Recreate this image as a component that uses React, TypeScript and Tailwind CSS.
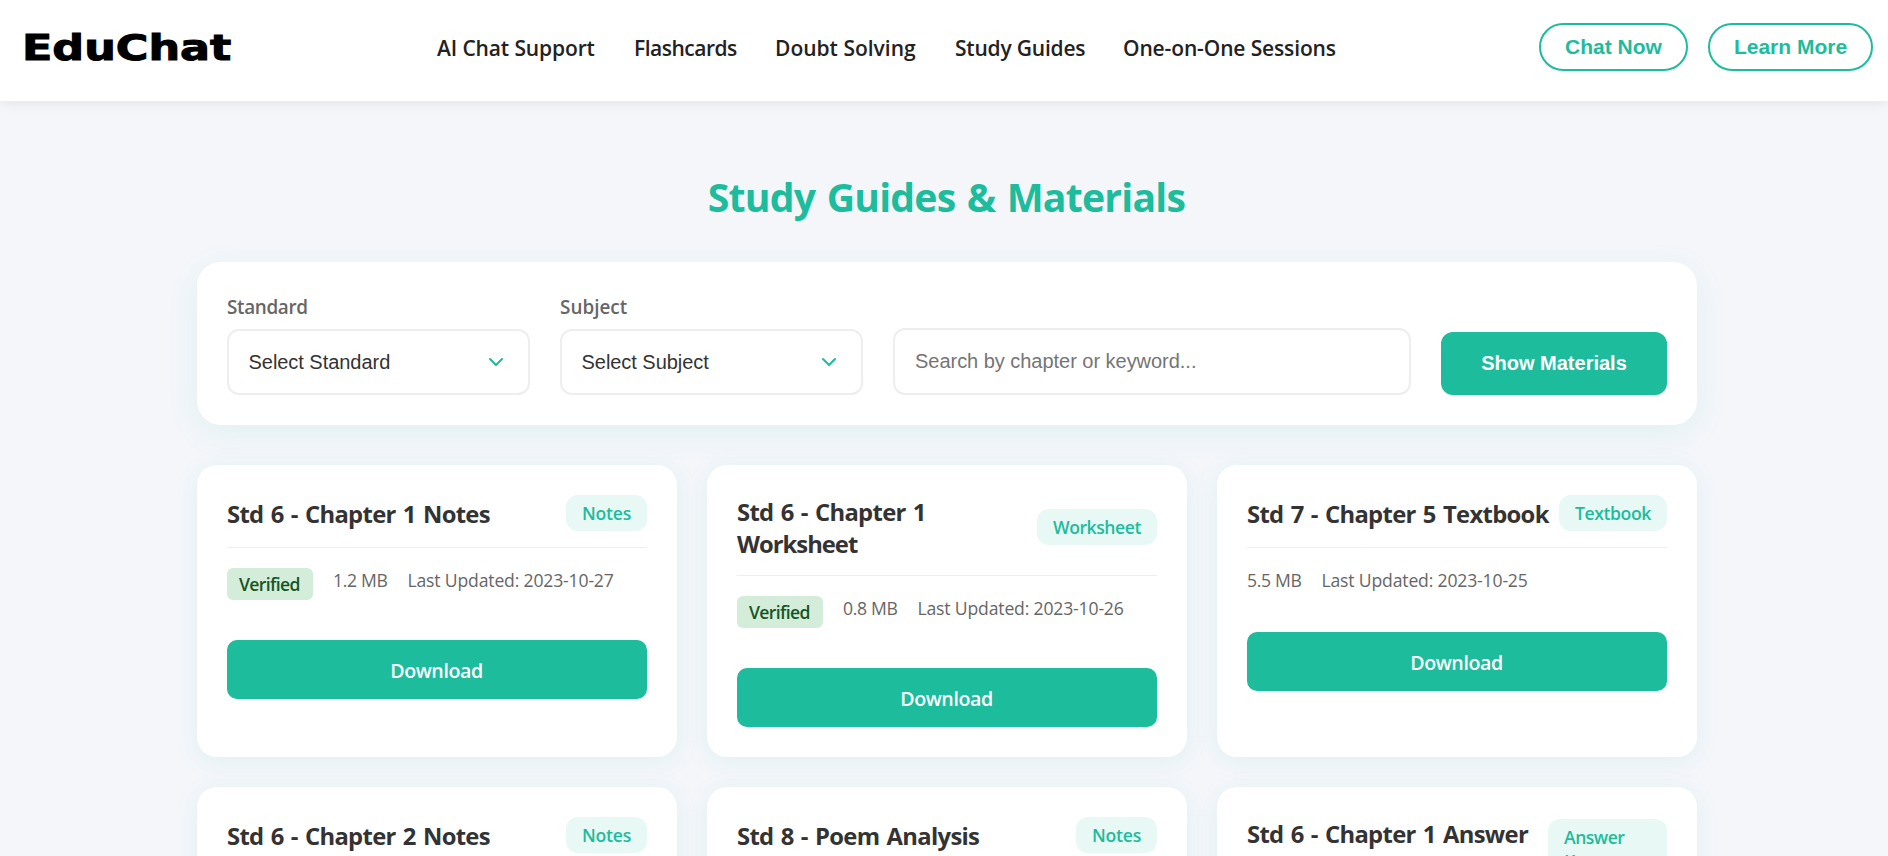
import type { ReactNode } from 'react'

type Material = {
  title: ReactNode
  badge: string
  badgeClass: string
  verified?: boolean
  size: string
  updated: string
}

const materials: Material[] = [
  { title: 'Std 6 - Chapter 1 Notes', badge: 'Notes', badgeClass: 'w-[81px] tracking-[-0.24px]', verified: true, size: '1.2 MB', updated: '2023-10-27' },
  { title: <>Std 6 - Chapter 1 <span className="tracking-[-1px]">Worksheet</span></>, badge: 'Worksheet', badgeClass: 'w-[120px] tracking-[-0.45px]', verified: true, size: '0.8 MB', updated: '2023-10-26' },
  { title: 'Std 7 - Chapter 5 Textbook', badge: 'Textbook', badgeClass: 'w-[108px] tracking-[-0.42px]', size: '5.5 MB', updated: '2023-10-25' },
  { title: 'Std 6 - Chapter 2 Notes', badge: 'Notes', badgeClass: 'w-[81px] tracking-[-0.24px]', verified: true, size: '1.5 MB', updated: '2023-10-24' },
  { title: 'Std 8 - Poem Analysis', badge: 'Notes', badgeClass: 'w-[81px] tracking-[-0.24px]', verified: true, size: '0.9 MB', updated: '2023-10-23' },
  { title: 'Std 6 - Chapter 1 Answer Key', badge: 'Answer Key', badgeClass: 'w-[119px] pr-10 tracking-[-0.5px]', size: '0.7 MB', updated: '2023-10-22' },
]

const navLinks = [
  { label: 'AI Chat Support', className: 'w-[157px] tracking-[-0.12px]' },
  { label: 'Flashcards', className: 'w-[101px] tracking-[-0.5px]' },
  { label: 'Doubt Solving', className: 'w-[140px]' },
  { label: 'Study Guides', className: 'w-[128px] tracking-[-0.2px]' },
  { label: 'One-on-One Sessions', className: 'w-[212px] tracking-[-0.13px]' },
]

function Chevron() {
  return (
    <svg width="14" height="10" viewBox="0 0 14 10" fill="none" stroke="#1cbc9c" strokeWidth="2" strokeLinecap="round" strokeLinejoin="round">
      <path d="m1 2 6 6 6-6" />
    </svg>
  )
}

function SelectField({ label, labelClass, placeholder }: { label: string; labelClass: string; placeholder: string }) {
  return (
    <div className="flex w-[303px] flex-col gap-[7px]">
      <label className={`text-[18.9px] leading-[29px] font-semibold text-[#666] ${labelClass}`}>{label}</label>
      <button className="flex h-[66px] items-center justify-between rounded-xl border-2 border-[#eee] bg-white pr-[25px] pl-[19.5px] font-['Liberation_Sans',sans-serif] text-xl tracking-[-0.04px] text-[#333]">
        {placeholder}
        <Chevron />
      </button>
    </div>
  )
}

function Card({ item }: { item: Material }) {
  return (
    <article className="rounded-[20px] bg-white p-[30px] shadow-[0_4px_24px_rgba(28,188,156,0.09)]">
      <div className="flex items-center justify-between border-b border-[#eee] pb-4">
        <h3 className="text-[23.8px] leading-8 font-bold tracking-[-0.68px] text-[#333] [word-spacing:1.7px]">
          <span className="relative top-[0.6px]">{item.title}</span>
        </h3>
        <span className={`shrink-0 rounded-xl bg-[#e8f8f5] px-4 py-1.5 text-[17.6px] leading-6 font-semibold text-[#1cbc9c] ${item.badgeClass}`}>{item.badge}</span>
      </div>
      <div className="mt-5 flex items-start gap-5 text-[17.6px] leading-6 text-[#666]">
        {item.verified && (
          <span className="w-[86px] rounded-md bg-[#d4edda] px-3 py-1 font-semibold tracking-[-0.65px] text-[#155724]">Verified</span>
        )}
        <span className="w-[54.5px] tracking-[-0.35px] whitespace-nowrap">{item.size}</span>
        <span className="tracking-[-0.17px]">Last Updated: {item.updated}</span>
      </div>
      <button className="mt-10 flex h-[59px] w-full items-center justify-center rounded-[10px] bg-[#1cbc9c] pt-0.5 pr-px text-[19.6px] font-semibold tracking-[-0.4px] text-white">Download</button>
    </article>
  )
}

export default function App() {
  return (
    <div className="h-[856px] overflow-hidden bg-[#f4f6fa] font-['Open_Sans',sans-serif]">
      <header className="relative flex h-[101px] items-center bg-white pr-[15px] pb-[7px] pl-[22px] shadow-[0_2px_12px_rgba(0,0,0,0.08)]">
        <div className="w-[415px] pt-0.5">
          <span className="inline-block origin-left scale-x-[1.27] font-['DejaVu_Sans',sans-serif] text-[35px] leading-10 font-bold text-black [-webkit-text-stroke:1px_black]">EduChat</span>
        </div>
        <nav className="flex gap-10 pt-[3px] text-[21px] text-[#222]">
          {navLinks.map((link) => (
            <a key={link.label} className={`font-[550] whitespace-nowrap ${link.className}`}>{link.label}</a>
          ))}
        </nav>
        <div className="ml-auto flex gap-5 font-['Liberation_Sans',sans-serif] text-[21px] font-bold text-[#1cbc9c]">
          <button className="h-12 w-[149px] rounded-full border-2 border-[#1cbc9c]">Chat Now</button>
          <button className="h-12 w-[165px] rounded-full border-2 border-[#1cbc9c]">Learn More</button>
        </div>
      </header>
      <main className="ml-[197px] w-[1500px] pt-[70px]">
        <h1 className="mb-[39px] pr-px text-center text-[39.2px] leading-[52px] font-bold tracking-[-0.8px] text-[#1cbc9c] [word-spacing:2px]">Study Guides &amp; Materials</h1>
        <section className="flex h-[163px] items-end gap-[30px] rounded-3xl bg-white p-[30px] shadow-[0_8px_32px_rgba(28,188,156,0.09)]">
          <SelectField label="Standard" labelClass="tracking-[-0.35px]" placeholder="Select Standard" />
          <SelectField label="Subject" labelClass="" placeholder="Select Subject" />
          <input className="h-[67px] w-[518px] rounded-xl border-2 border-[#eee] bg-white px-5 font-['Liberation_Sans',sans-serif] text-xl tracking-[-0.03px] text-[#333] placeholder:text-[#757575]" placeholder="Search by chapter or keyword..." />
          <button className="h-[63px] w-[226px] rounded-xl bg-[#1cbc9c] pb-0.5 font-['Liberation_Sans',sans-serif] text-xl font-bold text-white">Show Materials</button>
        </section>
        <section className="mt-10 grid grid-cols-3 gap-[30px]">
          {materials.map((item, i) => (
            <Card key={i} item={item} />
          ))}
        </section>
      </main>
    </div>
  )
}
